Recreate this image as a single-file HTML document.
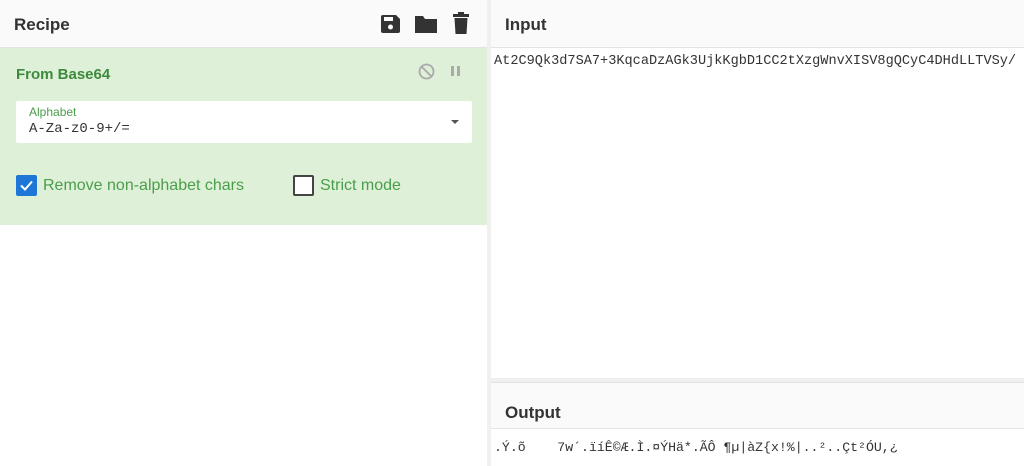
<!DOCTYPE html>
<html><head><meta charset="utf-8"><style>
*{margin:0;padding:0;box-sizing:border-box}
body{width:1024px;height:466px;overflow:hidden;background:#fff;font-family:"Liberation Sans",sans-serif;position:relative}
.hdr{position:absolute;height:48px;background:#fafafa;border-bottom:1px solid #e3e3e3;font-weight:bold;font-size:17px;color:#333}
.hdr span{position:absolute;left:14px;top:15px}
.mono{font-family:"Liberation Mono",monospace;font-size:13.6px;color:#333;position:absolute;white-space:pre}
</style></head><body>
<div class="hdr" style="left:0;top:0;width:487px"><span>Recipe</span>
<svg style="position:absolute;left:379px;top:13px" width="22" height="22" viewBox="0 0 22 22"><path d="M2 4a2 2 0 0 1 2-2h13l4 4v12a2 2 0 0 1-2 2H4a2 2 0 0 1-2-2z" fill="#333"/><rect x="5" y="4" width="9" height="4" fill="#fafafa"/><circle cx="11.5" cy="14" r="2.5" fill="#fafafa"/></svg>
<svg style="position:absolute;left:414px;top:14px" width="24" height="20" viewBox="0 0 24 20"><path d="M1 2h8l2 3h12v14H1z" fill="#333"/></svg>
<svg style="position:absolute;left:453px;top:12px" width="16" height="22" viewBox="0 0 16 22"><rect x="0" y="2" width="16" height="3" fill="#333"/><rect x="5" y="0" width="6" height="3" fill="#333"/><path d="M1.5 6h13l-1 16h-11z" fill="#333"/></svg>
</div>
<div style="position:absolute;left:0;top:48px;width:487px;height:177px;background:#dff0d8">
<div style="position:absolute;left:16px;top:18px;font-weight:bold;font-size:15px;color:#3c8a3c">From Base64</div>
<svg style="position:absolute;left:418px;top:15px" width="17" height="17" viewBox="0 0 17 17"><circle cx="8.5" cy="8.5" r="7" fill="none" stroke="#aaa" stroke-width="1.8"/><path d="M3.5 3.5l10 10" stroke="#aaa" stroke-width="1.8"/></svg>
<div style="position:absolute;left:451px;top:18px;width:3px;height:10px;background:#aaa"></div>
<div style="position:absolute;left:457px;top:18px;width:3px;height:10px;background:#aaa"></div>
<div style="position:absolute;left:16px;top:53px;width:456px;height:42px;background:#fff;border-radius:2px">
<div style="position:absolute;left:13px;top:4px;font-size:12px;color:#4a9e4a">Alphabet</div>
<div class="mono" style="left:13px;top:20px;font-size:14px">A-Za-z0-9+/=</div>
<div style="position:absolute;left:435px;top:19px;border-left:4px solid transparent;border-right:4px solid transparent;border-top:4px solid #555"></div>
</div>
<div style="position:absolute;left:16px;top:127px;width:21px;height:21px;background:#1e77d6;border-radius:2px"><svg width="21" height="21" viewBox="0 0 21 21"><path d="M5 10.5l4 4 7-8" fill="none" stroke="#fff" stroke-width="2"/></svg></div>
<div style="position:absolute;left:43px;top:129px;font-size:16px;color:#4a9e4a">Remove non-alphabet chars</div>
<div style="position:absolute;left:293px;top:127px;width:21px;height:21px;border:2px solid #444;border-radius:2px;background:#fff"></div>
<div style="position:absolute;left:320px;top:129px;font-size:16px;color:#4a9e4a">Strict mode</div>
</div>
<div style="position:absolute;left:487px;top:0;width:4px;height:466px;background:#f0f0f0"></div>
<div class="hdr" style="left:491px;top:0;width:533px"><span style="top:15px">Input</span></div>
<div class="mono" style="left:494px;top:54px">At2C9Qk3d7SA7+3KqcaDzAGk3UjkKgbD1CC2tXzgWnvXISV8gQCyC4DHdLLTVSy/</div>
<div style="position:absolute;left:491px;top:378px;width:533px;height:4px;background:#f0f0f0"></div>
<div class="hdr" style="left:491px;top:382px;width:533px;height:47px;border-top:1px solid #e3e3e3"><span style="top:20px">Output</span></div>
<div class="mono" style="left:494px;top:440px;font-size:13.2px">.Ý.õ    7w´.ïíÊ©Æ.Ì.¤ÝHä*.ÃÔ ¶µ|àZ{x!%|..²..Çt²ÓU,¿</div>
</body></html>
